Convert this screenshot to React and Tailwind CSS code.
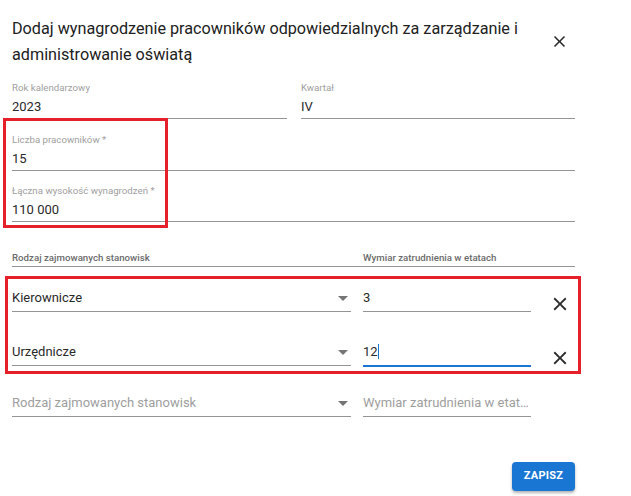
import React from 'react';

const CloseIcon = ({ size }) => (
  <svg width={size} height={size} viewBox="0 0 24 24" fill="#2b2b2b" className="block">
    <path d="M19 6.41 17.59 5 12 10.59 6.41 5 5 6.41 10.59 12 5 17.59 6.41 19 12 13.41 17.59 19 19 17.59 13.41 12z" />
  </svg>
);

const ArrowDrop = () => (
  <svg width="10" height="5" viewBox="0 0 10 5" className="mr-[3px] mt-[8px]">
    <path d="M0 0 L10 0 L5 5 Z" fill="#757575" />
  </svg>
);

const Field = ({ label, value }) => (
  <div className="flex flex-col border-b border-[#949494] pb-[1px]">
    <span className="text-[9.7px] leading-[12px] text-[#a0a0a0]">{label}</span>
    <span className="mt-[3px] text-[13px] leading-[20px] text-[#2a2a2a]">{value}</span>
  </div>
);

const PositionRow = ({ position, value, focused, placeholder, className }) => (
  <div className={`flex items-start ${className}`}>
    <div className="w-[339px] flex justify-between border-b border-[#949494] pb-[3px]">
      <span className={`text-[13px] leading-[20px] ${placeholder ? 'text-[#9e9e9e]' : 'text-[#2a2a2a]'}`}>
        {position}
      </span>
      <ArrowDrop />
    </div>
    <div
      className={`ml-[12px] w-[168px] ${
        focused ? 'border-b-[2px] border-[#1976d2]' : 'border-b border-[#949494]'
      } pb-[3px]`}
    >
      <div className={`truncate text-[13px] leading-[20px] ${placeholder ? 'text-[#9e9e9e]' : 'text-[#2a2a2a]'}`}>
        {value}
        {focused && <span className="inline-block w-[1px] h-[15px] bg-[#1976d2] align-[-3px]" />}
      </div>
    </div>
    {!placeholder && (
      <div className="ml-[18px] mt-[5px]">
        <CloseIcon size={22} />
      </div>
    )}
  </div>
);

const App = () => {
  return (
    <div className="relative w-[631px] h-[496px] bg-white overflow-hidden font-['Roboto',sans-serif]">
      <div className="pl-[12px] pt-[16px] w-[575px]">
        {/* header */}
        <div className="flex items-center">
          <h2 className="w-[538px] text-[16.2px] leading-[26px] text-[#212121] font-normal">
            Dodaj wynagrodzenie pracowników odpowiedzialnych za zarządzanie i administrowanie oświatą
          </h2>
          <div className="-mt-[2px]">
            <CloseIcon size={19} />
          </div>
        </div>

        <div className="mt-[14px] grid grid-cols-[275px_274px] gap-x-[14px]">
          <Field label="Rok kalendarzowy" value="2023" />
          <Field label="Kwartał" value="IV" />
        </div>

        <div className="mt-[15px] flex flex-col gap-[14px]">
          <Field label="Liczba pracowników *" value="15" />
          <Field label="Łączna wysokość wynagrodzeń *" value="110 000" />
        </div>

        <div className="mt-[30px] flex border-b border-[#949494] pb-[2px] text-[9.7px] leading-[12px] font-medium text-[#6b6b6b]">
          <span className="w-[351px]">Rodzaj zajmowanych stanowisk</span>
          <span>Wymiar zatrudnienia w etatach</span>
        </div>

        <PositionRow className="mt-[21px]" position="Kierownicze" value="3" />
        <PositionRow className="mt-[27px]" position="Urzędnicze" value="12" focused />
        <PositionRow
          className="mt-[24px]"
          position="Rodzaj zajmowanych stanowisk"
          value="Wymiar zatrudnienia w etatach"
          placeholder
        />

        <div className="mt-[45px] flex justify-end">
          <button className="w-[63px] h-[29px] rounded-[4px] bg-[#1976d2] text-white text-[11px] font-bold tracking-[0.3px] shadow-[0_2px_3px_rgba(0,0,0,0.3)]">
            ZAPISZ
          </button>
        </div>
      </div>

      {/* annotation frames */}
      <div className="absolute left-[3px] top-[118px] w-[165px] h-[110px] border-[3px] border-[#e6202b]" />
      <div className="absolute left-[5px] top-[276px] w-[576px] h-[98px] border-[3px] border-[#e6202b]" />
    </div>
  );
};

export default App;
